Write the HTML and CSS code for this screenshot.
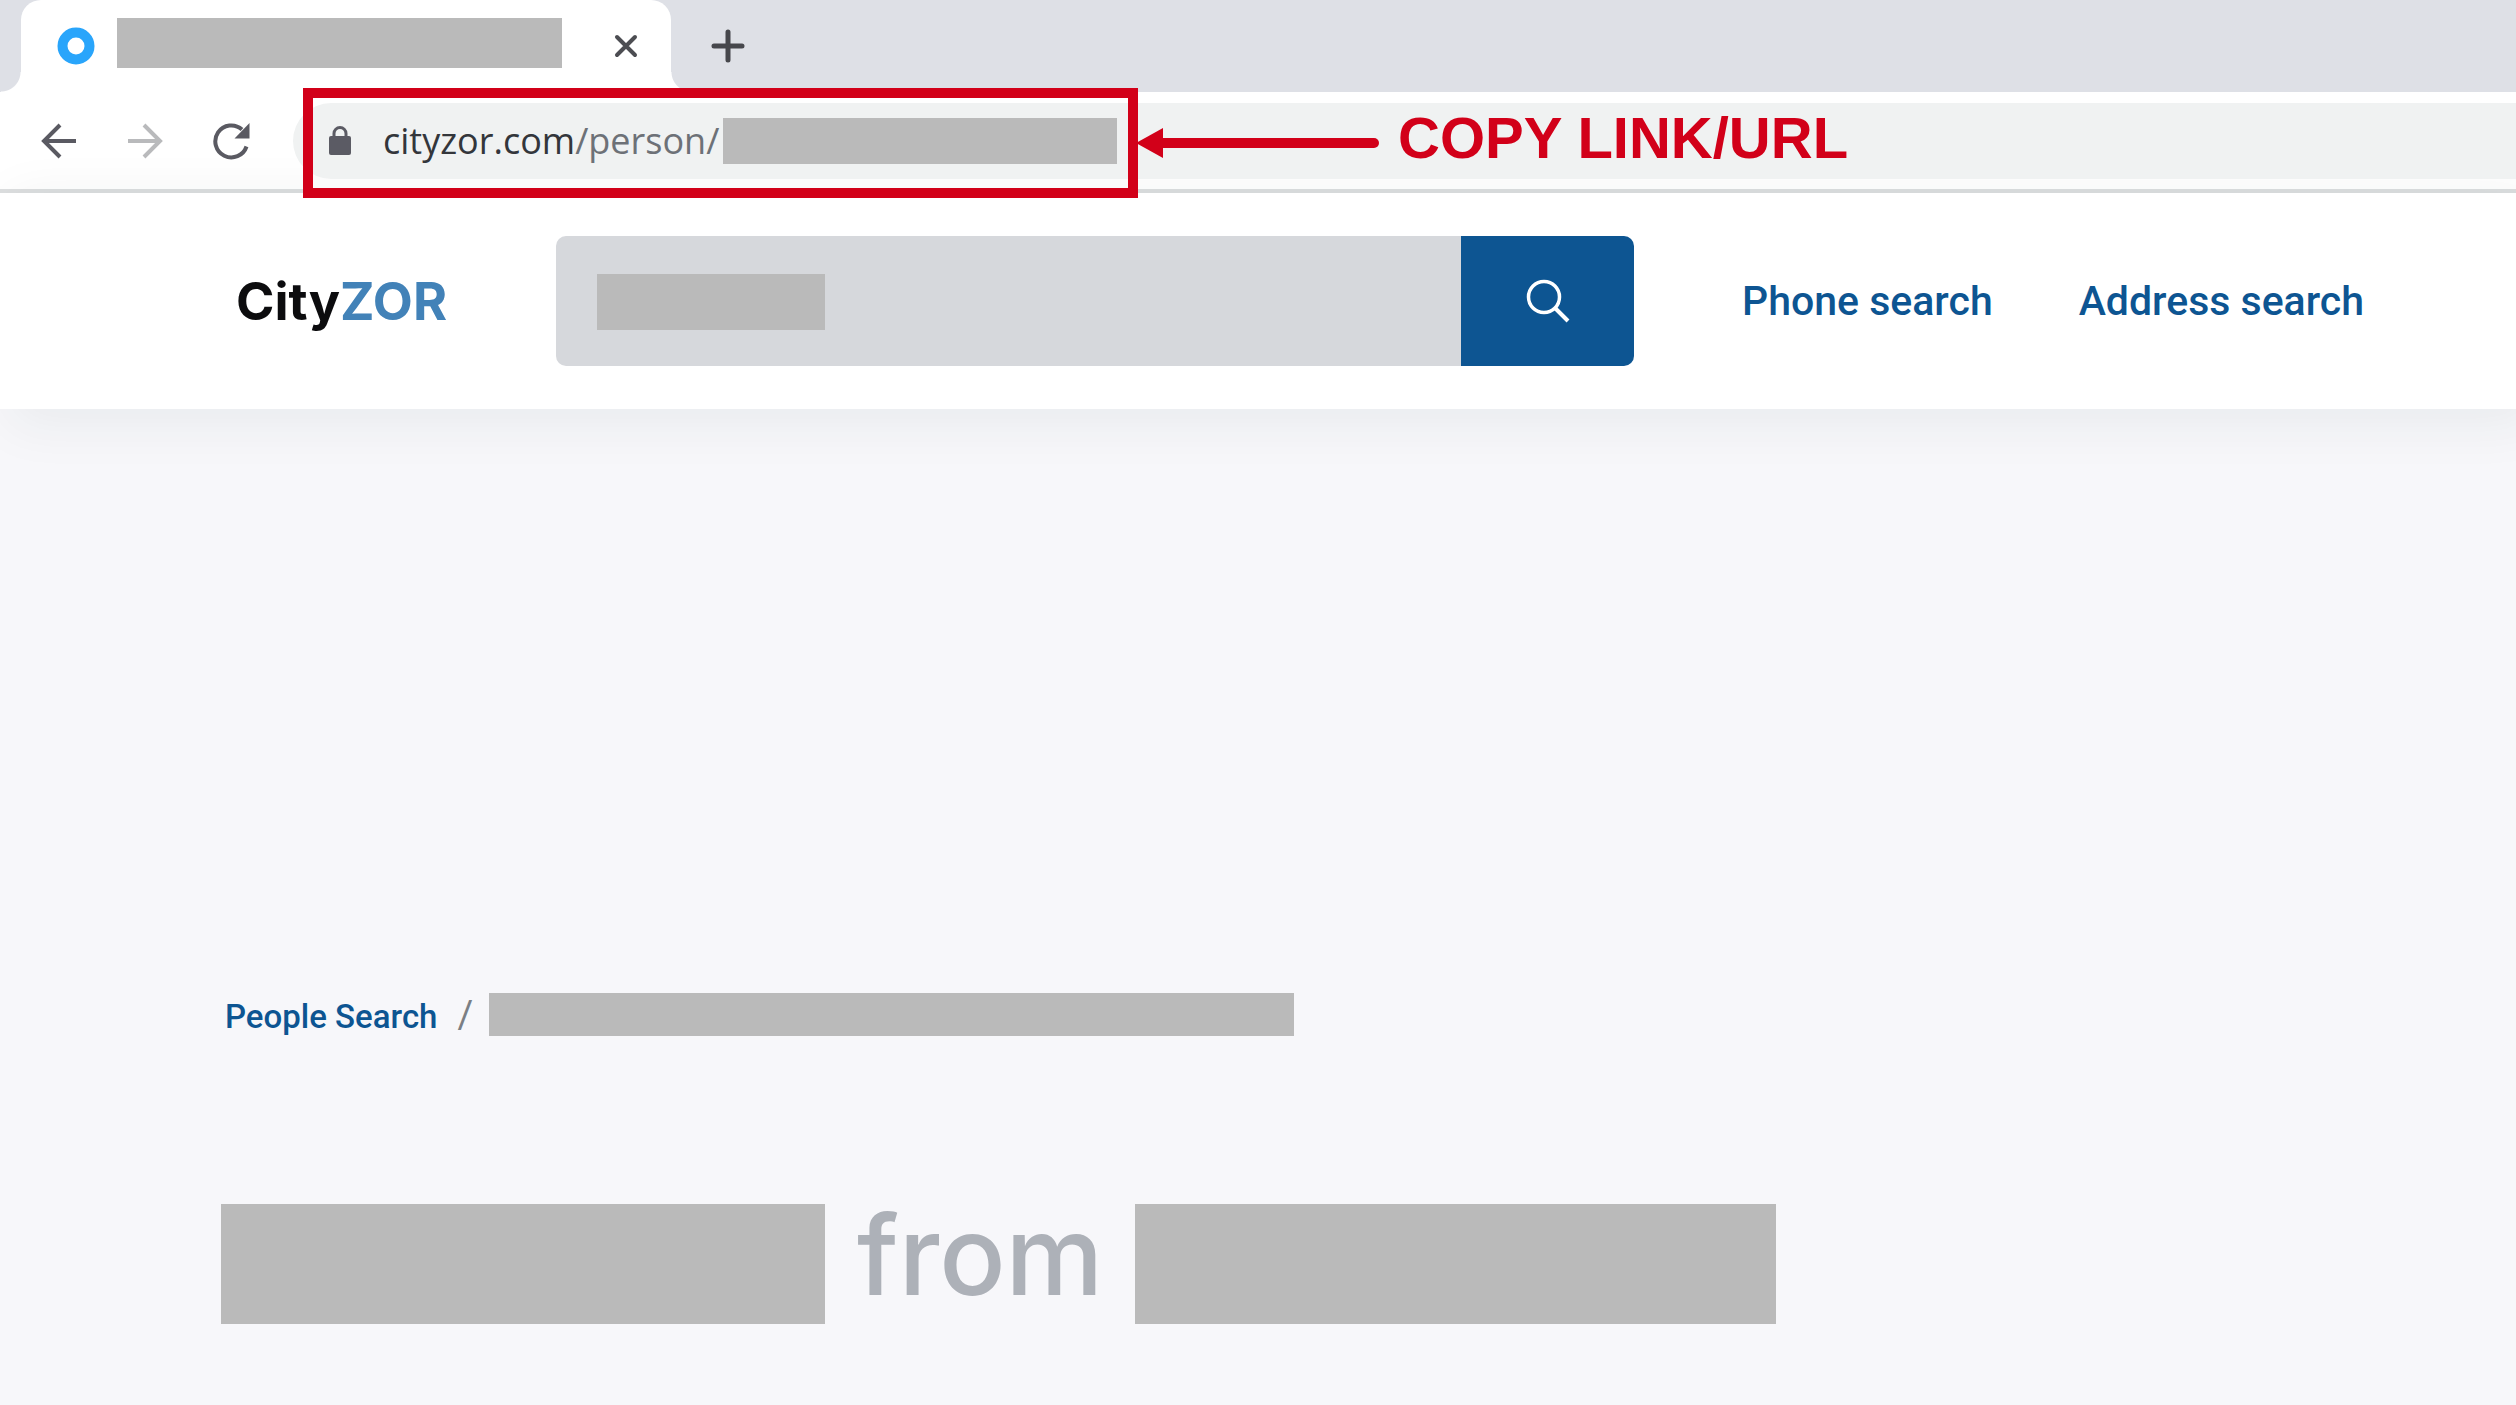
FILE: index.html
```
<!DOCTYPE html>
<html lang="en">
<head>
    <meta charset="UTF-8">
    <meta name="viewport" content="width=device-width, initial-scale=1.0">
    <title>CityZOR</title>
    <link rel="stylesheet" href="styles.css">
</head>
<body>
    <div class="browser">
        <div class="tabs">
            <div class="tab">
                <svg class="favicon" viewBox="0 0 38 38"><circle cx="19" cy="19" r="13.5" fill="none" stroke="#29a5fb" stroke-width="10"/></svg>
                <span class="hidden-text tab-title"></span>
                <button class="icon-btn" aria-label="Close tab">
                    <svg width="24" height="24" viewBox="0 0 24 24"><path d="M3 3L21 21M21 3L3 21" stroke="#4c4d52" stroke-width="4" stroke-linecap="round"/></svg>
                </button>
            </div>
            <button class="icon-btn new-tab" aria-label="New tab">
                <svg width="34" height="34" viewBox="0 0 34 34"><path d="M17 3V31M3 17H31" stroke="#46474c" stroke-width="5" stroke-linecap="round"/></svg>
            </button>
        </div>
        <div class="toolbar">
            <div class="controls">
                <button class="icon-btn" aria-label="Back">
                    <svg width="38" height="38" viewBox="0 0 38 38"><path d="M36 19H4M20 3L4 19L20 35" fill="none" stroke="#5a5a62" stroke-width="4"/></svg>
                </button>
                <button class="icon-btn" aria-label="Forward">
                    <svg width="38" height="38" viewBox="0 0 38 38"><path d="M2 19H34M18 3L34 19L18 35" fill="none" stroke="#b9babc" stroke-width="4"/></svg>
                </button>
                <button class="icon-btn" aria-label="Reload">
                    <svg width="38" height="38" viewBox="0 0 38 38"><path d="M34.500 24.500A16 16 0 1 1 30 7.500" fill="none" stroke="#5a5a62" stroke-width="4"/><path d="M37.500 1V16.500H22.500Z" fill="#5a5a62"/></svg>
                </button>
            </div>
            <div class="address">
                <svg class="lock" width="24" height="30" viewBox="0 0 24 30"><rect x="1" y="10" width="22" height="19" rx="2" fill="#5b5b64"/><path d="M6 11V7.500A6 6 0 0 1 18 7.500V11" fill="none" stroke="#5b5b64" stroke-width="3"/></svg>
                <span class="url">cityzor.com<span class="path">/person/</span></span>
                <span class="hidden-text url-rest"></span>
            </div>
            <div class="note">
                <div class="note-box"></div>
                <svg class="arrow" width="242" height="32" viewBox="0 0 242 32"><path d="M24 16H236" stroke="#d20019" stroke-width="10" stroke-linecap="round"/><path d="M-2 16L25 1V31Z" fill="#d20019"/></svg>
                <span class="note-text">COPY LINK/URL</span>
            </div>
        </div>
    </div>

    <header class="header">
        <a class="logo" href="#">City<span>ZOR</span></a>
        <form class="search">
            <input type="text" class="search-input" aria-label="Search people">
            <span class="hidden-text search-value"></span>
            <button type="button" class="search-btn" aria-label="Search">
                <svg width="44" height="44" viewBox="0 0 44 44" fill="none" stroke="#fff" stroke-width="3.500"><circle cx="18" cy="18" r="15.500"/><path d="M29 29L42 42" stroke-width="4"/></svg>
            </button>
        </form>
        <nav class="nav">
            <a href="#">Phone search</a>
            <a href="#">Address search</a>
        </nav>
    </header>

    <main class="content">
        <div class="breadcrumb">
            <a href="#">People Search</a>
            <span class="slash">/</span>
            <span class="hidden-text crumb"></span>
        </div>
        <h1>
            <span class="hidden-text name"></span>
            <span class="from">from</span>
            <span class="hidden-text place"></span>
        </h1>
    </main>
</body>
</html>
```
FILE: styles.css
```
* {
    box-sizing: border-box;
}
body {
    margin: 0;
    background: #f7f7fa;
    font-family: Roboto, Arial, sans-serif;
}
a {
    color: #0d5592;
    text-decoration: none;
}
svg {
    display: block;
}
.hidden-text {
    display: block;
    background: #bababa;
}
.icon-btn {
    padding: 0;
    border: none;
    background: none;
    cursor: pointer;
}

/* browser window */
.browser {
    background: #fff;
    border-bottom: 4px solid #dcdedf;
}
.tabs {
    display: flex;
    align-items: center;
    height: 92px;
    padding-left: 21px;
    background: #dee0e6;
}
.tab {
    position: relative;
    display: flex;
    align-items: center;
    width: 650px;
    height: 92px;
    padding: 0 33px 0 36px;
    background: #fff;
    border-radius: 20px 20px 0 0;
}
.tab::before, .tab::after {
    content: "";
    position: absolute;
    bottom: 0;
    width: 20px;
    height: 20px;
}
.tab::before {
    left: -20px;
    background: radial-gradient(circle at 0 0, #dee0e6 19px, #fff 20px);
}
.tab::after {
    right: -20px;
    background: radial-gradient(circle at 100% 0, #dee0e6 19px, #fff 20px);
}
.favicon {
    width: 38px;
    height: 38px;
}
.tab-title {
    width: 445px;
    height: 50px;
    margin: 0 auto 6px 22px;
}
.new-tab {
    margin-left: 40px;
}
.toolbar {
    position: relative;
    display: flex;
    align-items: center;
    height: 97px;
    padding-left: 40px;
}
.controls {
    display: flex;
    gap: 48px;
    width: 253px;
}
.address {
    display: flex;
    flex: 1;
    align-items: center;
    height: 76px;
    padding-left: 35px;
    background: #f0f2f2;
    border-radius: 38px 0 0 38px;
}
.url {
    margin: 0 4px 0 31px;
    font: 36px "Open Sans", sans-serif;
    color: #33363b;
}
.path {
    color: #6d7177;
}
.url-rest {
    width: 394px;
    height: 46px;
}

/* red marking over the address bar */
.note {
    position: absolute;
    top: -4px;
    left: 303px;
    display: flex;
    align-items: center;
    color: #d20019;
}
.note-box {
    width: 835px;
    height: 110px;
    border: 10px solid #d20019;
}
.arrow {
    overflow: visible;
}
.note-text {
    margin-left: 18px;
    padding-bottom: 12px;
    font: bold 58px "Liberation Sans", Arial, sans-serif;
}

/* site header */
.header {
    display: flex;
    align-items: center;
    height: 216px;
    padding: 0 152px 0 236px;
    background: #fff;
    box-shadow: 15px 10px 50px 6px rgba(20, 50, 50, 0.06);
}
.logo {
    width: 320px;
    font: bold 52px Inter, sans-serif;
    color: #0c0c0e;
}
.logo span {
    color: #4282b8;
}
.search {
    position: relative;
    display: flex;
    flex: 1;
    height: 130px;
    border-radius: 10px;
    overflow: hidden;
}
.search-input {
    flex: 1;
    padding: 0 40px;
    border: none;
    background: #d6d8dc;
    font-size: 40px;
}
.search-value {
    position: absolute;
    top: 38px;
    left: 41px;
    width: 228px;
    height: 56px;
}
.search-btn {
    display: flex;
    align-items: center;
    justify-content: center;
    width: 173px;
    border: none;
    background: #0d5592;
    cursor: pointer;
}
.nav {
    display: flex;
    gap: 86px;
    margin-left: 108px;
    font-size: 41px;
    font-weight: 500;
}

/* person page */
.content {
    padding: 584px 221px 80px;
}
.breadcrumb {
    display: flex;
    align-items: center;
    height: 43px;
    padding-left: 4px;
    font-size: 33px;
    line-height: 38px;
    font-weight: 500;
}
.breadcrumb a {
    padding-top: 5px;
}
.slash {
    margin: 0 16px 0 20px;
    font-size: 38px;
    font-weight: 400;
    color: #7b7f84;
}
.crumb {
    width: 805px;
    height: 43px;
}
h1 {
    display: flex;
    align-items: center;
    gap: 32px;
    height: 120px;
    margin: 168px 0 0;
    font: 500 110px Inter, sans-serif;
    color: #adb1b8;
}
.name {
    width: 604px;
    height: 120px;
}
.from {
    padding-bottom: 18px;
}
.place {
    width: 641px;
    height: 120px;
}
```
